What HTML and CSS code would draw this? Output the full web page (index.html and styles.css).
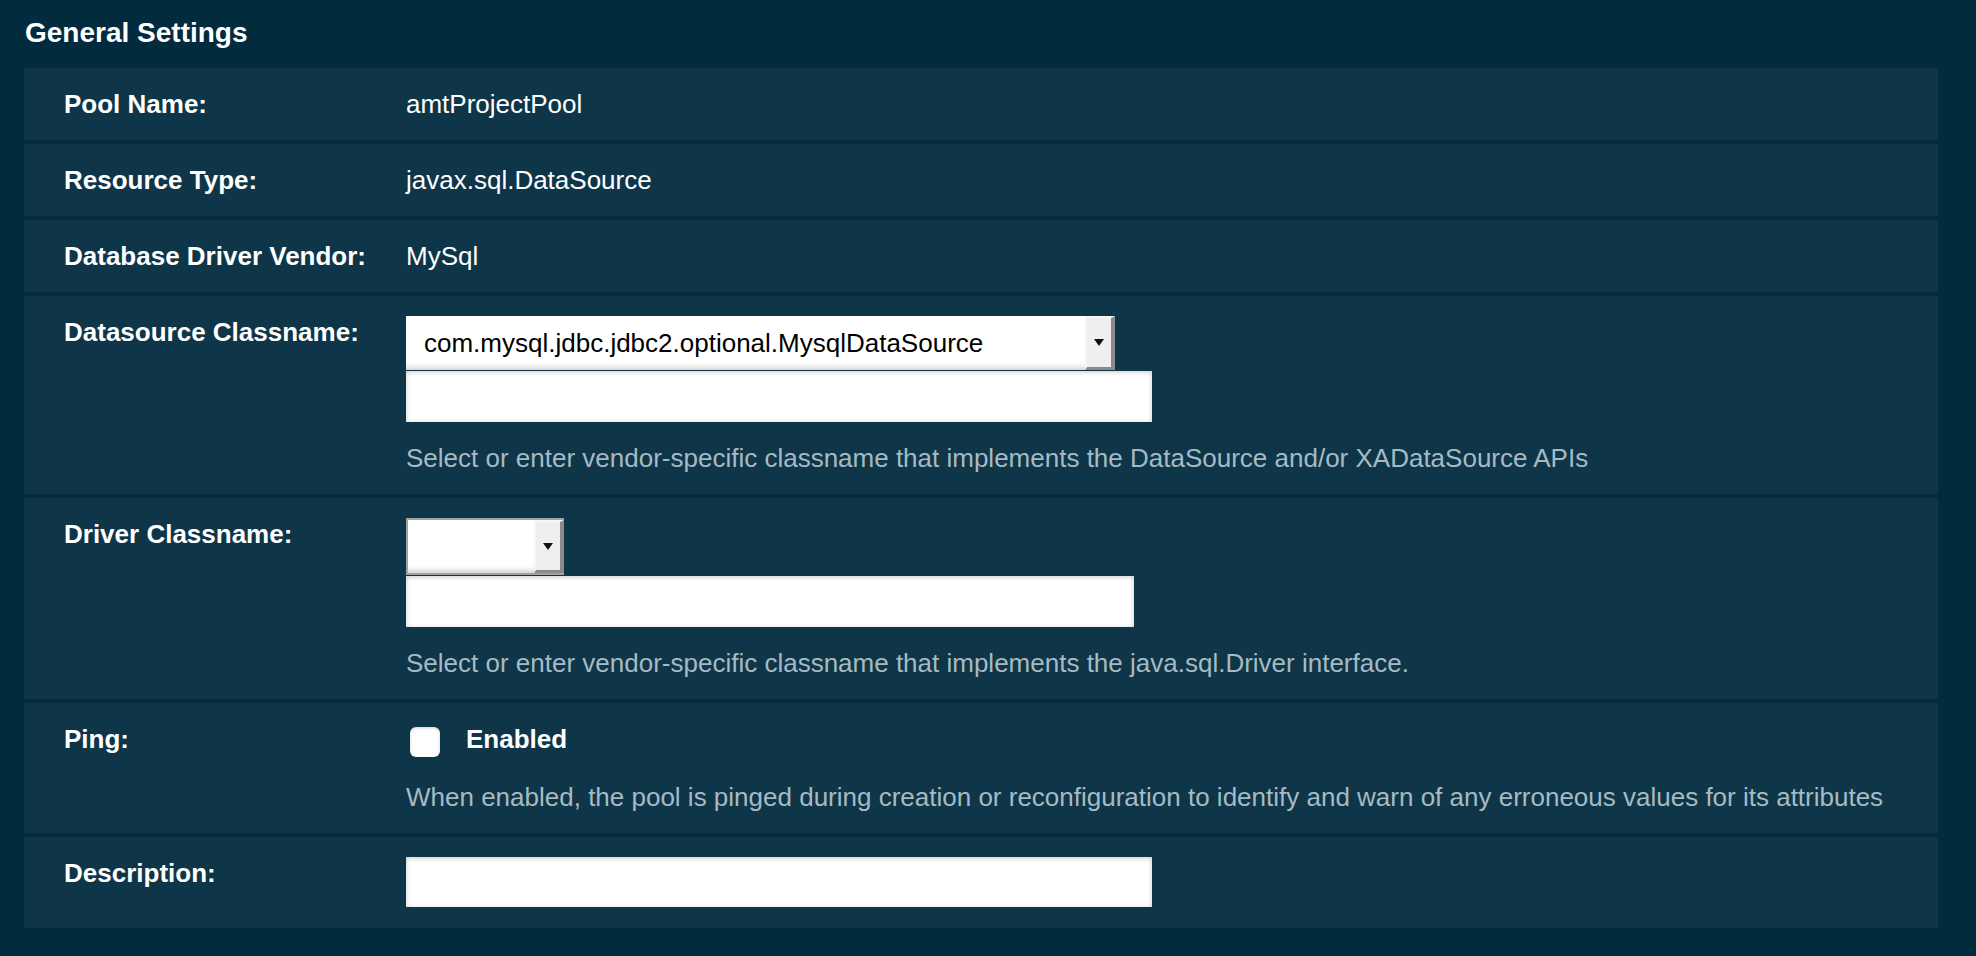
FILE: index.html
```html
<!DOCTYPE html>
<html lang="en">
<head>
<meta charset="utf-8">
<title>General Settings</title>
<link rel="stylesheet" href="styles.css">
</head>
<body>
<div class="page">
  <h2 class="title">General Settings</h2>
  <div class="panel">
    <div class="row">
      <div class="label">Pool Name:</div>
      <div class="value">amtProjectPool</div>
    </div>
    <div class="row">
      <div class="label">Resource Type:</div>
      <div class="value">javax.sql.DataSource</div>
    </div>
    <div class="row">
      <div class="label">Database Driver Vendor:</div>
      <div class="value">MySql</div>
    </div>
    <div class="row">
      <div class="label">Datasource Classname:</div>
      <div class="value">
        <div class="combo combo-wide">
          <select class="combo-select">
            <option>com.mysql.jdbc.jdbc2.optional.MysqlDataSource</option>
          </select>
          <span class="combo-btn"><span class="tri"></span></span>
        </div>
        <input class="field field-wide" type="text">
        <div class="help">Select or enter vendor-specific classname that implements the DataSource and/or XADataSource APIs</div>
      </div>
    </div>
    <div class="row">
      <div class="label">Driver Classname:</div>
      <div class="value">
        <div class="combo combo-small">
          <select class="combo-select">
            <option></option>
          </select>
          <span class="combo-btn"><span class="tri"></span></span>
        </div>
        <input class="field field-mid" type="text">
        <div class="help">Select or enter vendor-specific classname that implements the java.sql.Driver interface.</div>
      </div>
    </div>
    <div class="row">
      <div class="label">Ping:</div>
      <div class="value">
        <label class="check-line"><span class="checkbox"></span><span class="check-text">Enabled</span></label>
        <div class="help help-ping">When enabled, the pool is pinged during creation or reconfiguration to identify and warn of any erroneous values for its attributes</div>
      </div>
    </div>
    <div class="row row-last">
      <div class="label">Description:</div>
      <div class="value">
        <input class="field field-wide field-desc" type="text">
      </div>
    </div>
  </div>
</div>
</body>
</html>
```

FILE: styles.css
```css
html, body {
  margin: 0;
  padding: 0;
  background: #022b3e;
  font-family: "Liberation Sans", Arial, Helvetica, sans-serif;
  color: #ffffff;
}

.page {
  padding: 17px 38px 0 24px;
}

.title {
  margin: 0 0 19px 1px;
  font-size: 28px;
  line-height: 32px;
  font-weight: bold;
  color: #ffffff;
}

.panel {
  display: flex;
  flex-direction: column;
  gap: 4px;
}

.row {
  display: grid;
  grid-template-columns: 342px 1fr;
  align-items: start;
  padding: 18px 0 18px 40px;
  background: #0e3648;
}

.row-last {
  padding-bottom: 21px;
}

.label {
  font-size: 26px;
  line-height: 36px;
  font-weight: bold;
}

.value {
  font-size: 26px;
  line-height: 36px;
  display: flex;
  flex-direction: column;
  align-items: flex-start;
}

.combo {
  display: flex;
  margin-top: 2px;
  background: #ffffff;
  box-sizing: border-box;
  box-shadow: inset 0 -7px 6px -5px rgba(0, 0, 0, 0.22);
}

.combo-wide {
  width: 709px;
  height: 54px;
}

.combo-small {
  width: 158px;
  height: 57px;
  border: 2px solid #a2a2a2;
  border-right: none;
}

.combo-select {
  flex: 1;
  min-width: 0;
  -webkit-appearance: none;
  appearance: none;
  border: none;
  outline: none;
  background: transparent;
  font-family: "Liberation Sans", Arial, Helvetica, sans-serif;
  font-size: 26px;
  color: #000000;
  padding: 0 0 0 18px;
  margin: 0;
  height: 100%;
}

.combo-btn {
  width: 30px;
  box-sizing: border-box;
  background: #efefef;
  border-top: 2px solid #f6f6f6;
  border-left: 2px solid #f6f6f6;
  border-right: 4px solid #8a8a8a;
  border-bottom: 3px solid #8a8a8a;
  display: flex;
  align-items: center;
  justify-content: center;
}

.tri {
  width: 0;
  height: 0;
  border-left: 5px solid transparent;
  border-right: 5px solid transparent;
  border-top: 7px solid #111111;
}

.field {
  display: block;
  margin: 1px 0 0 0;
  padding: 0;
  border: none;
  outline: none;
  background: #ffffff;
  box-sizing: border-box;
  height: 51px;
  box-shadow: inset 0 1px 5px rgba(0, 0, 0, 0.22);
}

.field-wide {
  width: 746px;
}

.field-mid {
  width: 728px;
}

.field-desc {
  margin-top: 2px;
  height: 50px;
}

.help {
  margin-top: 18px;
  color: #a6bac3;
}

.help-ping {
  margin-top: 22px;
}

.check-line {
  display: flex;
  align-items: center;
  height: 36px;
}

.checkbox {
  width: 30px;
  height: 30px;
  margin: 6px 0 0 4px;
  background: #ffffff;
  border-radius: 6px;
  box-shadow: inset 0 1px 3px rgba(0, 0, 0, 0.2);
}

.check-text {
  margin-left: 26px;
  font-weight: bold;
}
```
